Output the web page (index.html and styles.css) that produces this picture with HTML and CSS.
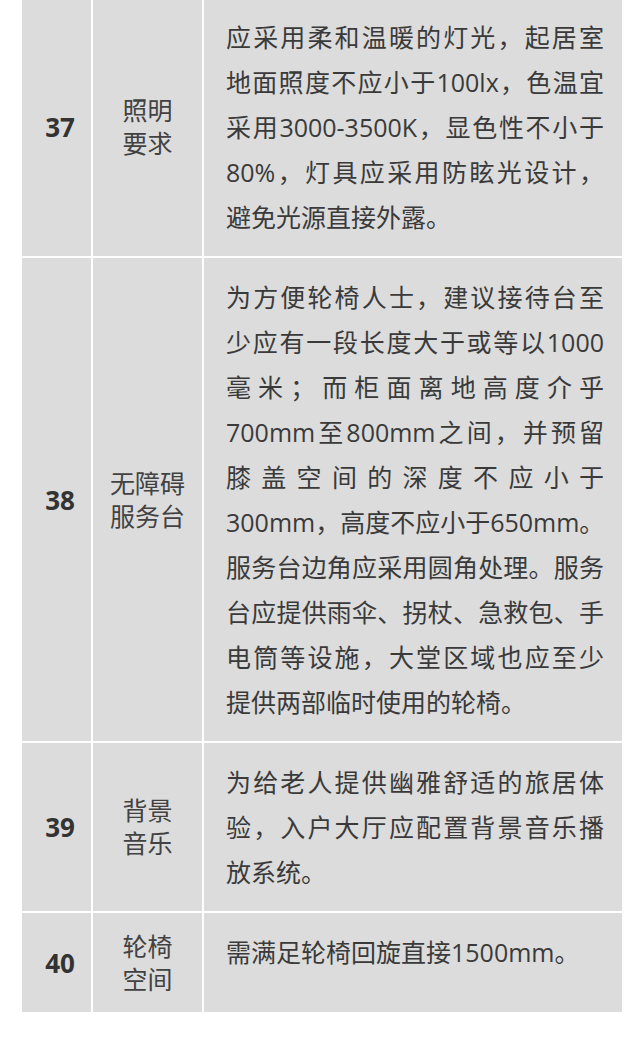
FILE: index.html
```html
<!DOCTYPE html>
<html lang="zh-CN">
<head>
<meta charset="utf-8">
<title>无障碍设计要求</title>
<link rel="stylesheet" href="styles.css">
</head>
<body>
<div class="spec-table">
  <div class="cell num">37</div>
  <div class="cell item">照明<br>要求</div>
  <div class="cell desc">
    <span class="ln">应采用柔和温暖的灯光，起居室</span>
    <span class="ln">地面照度不应小于100lx，色温宜</span>
    <span class="ln">采用3000-3500K，显色性不小于</span>
    <span class="ln">80%，灯具应采用防眩光设计，</span>
    <span class="ln last">避免光源直接外露。</span>
  </div>

  <div class="cell num">38</div>
  <div class="cell item">无障碍<br>服务台</div>
  <div class="cell desc">
    <span class="ln">为方便轮椅人士，建议接待台至</span>
    <span class="ln">少应有一段长度大于或等以1000</span>
    <span class="ln">毫米；而柜面离地高度介乎</span>
    <span class="ln">700mm至800mm之间，并预留</span>
    <span class="ln">膝盖空间的深度不应小于</span>
    <span class="ln">300mm，高度不应小于650mm。</span>
    <span class="ln">服务台边角应采用圆角处理。服务</span>
    <span class="ln">台应提供雨伞、拐杖、急救包、手</span>
    <span class="ln">电筒等设施，大堂区域也应至少</span>
    <span class="ln last">提供两部临时使用的轮椅。</span>
  </div>

  <div class="cell num">39</div>
  <div class="cell item">背景<br>音乐</div>
  <div class="cell desc">
    <span class="ln">为给老人提供幽雅舒适的旅居体</span>
    <span class="ln">验，入户大厅应配置背景音乐播</span>
    <span class="ln last">放系统。</span>
  </div>

  <div class="cell num">40</div>
  <div class="cell item">轮椅<br>空间</div>
  <div class="cell desc">
    <span class="ln last">需满足轮椅回旋直接1500mm。</span>
  </div>
</div>
</body>
</html>
```

FILE: styles.css
```css
html, body {
  margin: 0;
  padding: 0;
  background: #ffffff;
}

body {
  font-family: "Open Sans", "Noto Sans CJK SC", sans-serif;
  color: #3a3a3a;
}

.spec-table {
  display: grid;
  grid-template-columns: 69px 109px 418px;
  gap: 2px;
  width: 600px;
  margin: -2px 0 0 22px;
  background: #ffffff;
}

.cell {
  background: #dcdcdc;
  padding: 16.5px 0;
}

.num {
  display: flex;
  align-items: center;
  justify-content: center;
  padding-left: 7px;
  font-size: 26px;
  font-weight: 700;
  color: #333333;
}

.item {
  display: flex;
  align-items: center;
  justify-content: center;
  text-align: center;
  font-size: 25px;
  line-height: 33px;
  color: #424242;
}

.desc {
  padding-left: 22px;
  padding-right: 18px;
  font-size: 25px;
  line-height: 45px;
  color: #3a3a3a;
}

.ln {
  display: block;
  white-space: nowrap;
  text-align: justify;
  text-align-last: justify;
}

.ln.last {
  text-align-last: left;
}
```
